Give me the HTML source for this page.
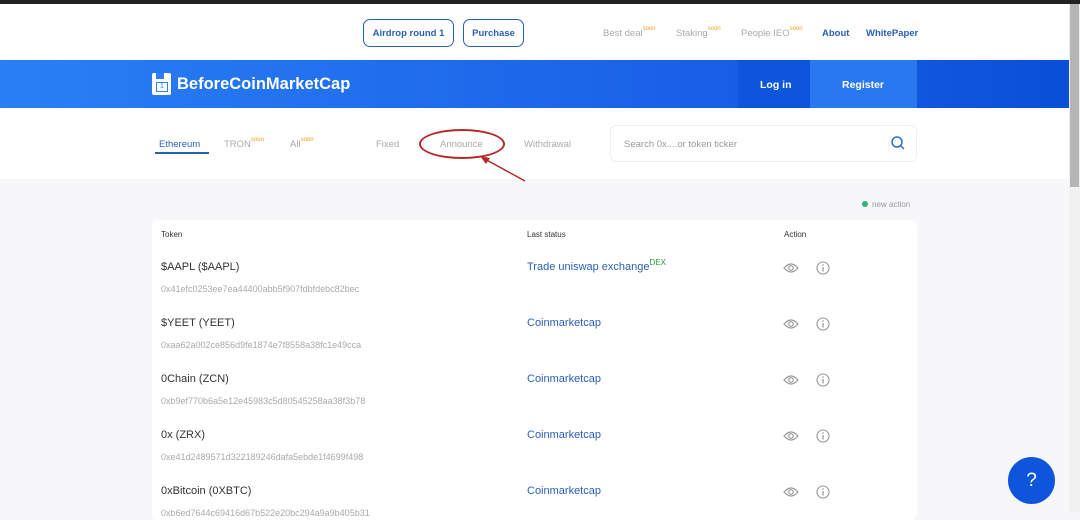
<!DOCTYPE html>
<html><head><meta charset="utf-8"><style>
*{margin:0;padding:0;box-sizing:border-box}
body{width:1080px;height:512px;overflow:hidden;background:#f7f7fa;font-family:"Liberation Sans",sans-serif;position:relative}
.a{position:absolute;white-space:nowrap}
.sup{font-size:6px;color:#f0a020;vertical-align:top;position:relative;top:-2px}
.btn{display:flex;align-items:center;justify-content:center;border:1.5px solid #2b5fb5;border-radius:7px;font-size:9.5px;font-weight:bold;color:#2b5fb5}
</style></head><body>
<div class="a" style="left:0;top:0;width:1080px;height:4px;background:#222"></div>
<div class="a" style="left:0;top:4px;width:1069px;height:56px;background:#fff"></div>
<div class="a btn" style="left:363px;top:19px;width:91px;height:28px">Airdrop round 1</div>
<div class="a btn" style="left:463px;top:19px;width:61px;height:28px">Purchase</div>
<div class="a" style="left:603px;top:28px;font-size:9.5px;color:#aaa">Best deal<span class="sup">soon</span></div>
<div class="a" style="left:676px;top:28px;font-size:9.5px;color:#aaa">Staking<span class="sup">soon</span></div>
<div class="a" style="left:741px;top:28px;font-size:9.5px;color:#aaa">People IEO<span class="sup">soon</span></div>
<div class="a" style="left:822px;top:28px;font-size:9.5px;font-weight:bold;color:#2b5fb5">About</div>
<div class="a" style="left:866px;top:28px;font-size:9.5px;font-weight:bold;color:#2b5fb5">WhitePaper</div>
<div class="a" style="left:0;top:60px;width:1069px;height:48px;background:linear-gradient(90deg,#2a7ff5,#1a63e8 60%,#0a4fd8)"></div>
<div class="a" style="left:738px;top:60px;width:72px;height:48px;background:#0d56dc"></div>
<div class="a" style="left:810px;top:60px;width:107px;height:48px;background:#2a78f0"></div>
<div class="a" style="left:152px;top:73px;width:19px;height:22px;background:#fff;border-radius:2px"></div>
<div class="a" style="left:156px;top:73px;width:8px;height:6px;background:#2a7ff5"></div>
<div class="a" style="left:156px;top:82px;width:12px;height:10px;border:1px solid #2a7ff5;font-size:7px;color:#2a7ff5;text-align:center;line-height:8px">1</div>
<div class="a" style="left:177px;top:75px;font-size:16.5px;font-weight:bold;color:#fff">BeforeCoinMarketCap</div>
<div class="a" style="left:760px;top:79px;font-size:10.5px;font-weight:bold;color:#fff">Log in</div>
<div class="a" style="left:842px;top:79px;font-size:10.5px;font-weight:bold;color:#fff">Register</div>
<div class="a" style="left:0;top:108px;width:1069px;height:71px;background:#fff"></div>
<div class="a" style="left:159px;top:139px;font-size:9.5px;color:#2b5fb5">Ethereum</div>
<div class="a" style="left:155px;top:152px;width:54px;height:2px;background:#2b5fb5"></div>
<div class="a" style="left:224px;top:139px;font-size:9.5px;color:#aaa">TRON<span class="sup">soon</span></div>
<div class="a" style="left:290px;top:139px;font-size:9.5px;color:#aaa">All<span class="sup">soon</span></div>
<div class="a" style="left:376px;top:139px;font-size:9.5px;color:#aaa">Fixed</div>
<div class="a" style="left:440px;top:139px;font-size:9.5px;color:#aaa">Announce</div>
<div class="a" style="left:524px;top:139px;font-size:9.5px;color:#aaa">Withdrawal</div>
<div class="a" style="left:419px;top:129px;width:86px;height:30px;border:2.5px solid #b42a2a;border-radius:50%"></div>
<svg class="a" style="left:475px;top:152px" width="55" height="32"><line x1="50" y1="29" x2="8" y2="6" stroke="#b42a2a" stroke-width="1.5"/><path d="M5 4 L15 6 L11 12 Z" fill="#b42a2a"/></svg>
<div class="a" style="left:610px;top:125px;width:307px;height:37px;border:1px solid #eee;border-radius:6px;background:#fff"></div>
<div class="a" style="left:624px;top:139px;font-size:9.5px;color:#999">Search 0x....or token ticker</div>
<svg class="a" style="left:890px;top:135px" width="16" height="16"><circle cx="7" cy="7" r="5" fill="none" stroke="#2b6fd0" stroke-width="1.5"/><line x1="10.5" y1="10.5" x2="14" y2="14" stroke="#2b6fd0" stroke-width="1.5"/></svg>
<div class="a" style="left:862px;top:201px;width:6px;height:6px;border-radius:50%;background:#2bb67b"></div>
<div class="a" style="left:872px;top:200px;font-size:8px;color:#999">new action</div>
<div class="a" style="left:152px;top:220px;width:765px;height:300px;background:#fff;border-radius:6px"></div>
<div class="a" style="left:161px;top:230px;font-size:8px;color:#333">Token</div>
<div class="a" style="left:527px;top:230px;font-size:8px;color:#333">Last status</div>
<div class="a" style="left:784px;top:230px;font-size:8px;color:#333">Action</div>
<div id="rows"></div>
<div class="a" style="left:1069px;top:4px;width:11px;height:508px;background:#f1f1f1"></div>
<div class="a" style="left:1070px;top:4px;width:9px;height:183px;background:#b5b5b5"></div>
<div class="a" style="left:1008px;top:457px;width:47px;height:47px;border-radius:50%;background:#0d56dc;color:#fff;font-size:19px;text-align:center;line-height:47px">?</div>
<script>
var d=[["$AAPL ($AAPL)","0x41efc0253ee7ea44400abb5f907fdbfdebc82bec","Trade uniswap exchange",1],["$YEET (YEET)","0xaa62a002ce856d9fe1874e7f8558a38fc1e49cca","Coinmarketcap"],["0Chain (ZCN)","0xb9ef770b6a5e12e45983c5d80545258aa38f3b78","Coinmarketcap"],["0x (ZRX)","0xe41d2489571d322189246dafa5ebde1f4699f498","Coinmarketcap"],["0xBitcoin (0XBTC)","0xb6ed7644c69416d67b522e20bc294a9a9b405b31","Coinmarketcap"]];
var h="";d.forEach(function(r,i){var y=261+56*i;
h+='<div class="a" style="left:161px;top:'+y+'px;font-size:11px;color:#333">'+r[0]+'</div>';
h+='<div class="a" style="left:161px;top:'+(y+23)+'px;font-size:9px;color:#aaa">'+r[1]+'</div>';
h+='<div class="a" style="left:527px;top:'+y+'px;font-size:11px;color:#2b5fb5">'+r[2]+(r[3]?'<span style="font-size:8px;color:#2a9a3a;vertical-align:top;position:relative;top:-3px">DEX</span>':'')+'</div>';
h+='<svg class="a" style="left:783px;top:'+y+'px" width="16" height="14"><path d="M1 7 Q8 -1 15 7 Q8 15 1 7Z" fill="none" stroke="#999" stroke-width="1.2"/><circle cx="8" cy="7" r="2.3" fill="none" stroke="#999" stroke-width="1.2"/></svg>';
h+='<svg class="a" style="left:816px;top:'+y+'px" width="14" height="14"><circle cx="7" cy="7" r="6" fill="none" stroke="#999" stroke-width="1.1"/><line x1="7" y1="6" x2="7" y2="10.5" stroke="#999" stroke-width="1.3"/><circle cx="7" cy="4" r=".8" fill="#999"/></svg>';});
document.getElementById("rows").outerHTML=h;
</script>
</body></html>
